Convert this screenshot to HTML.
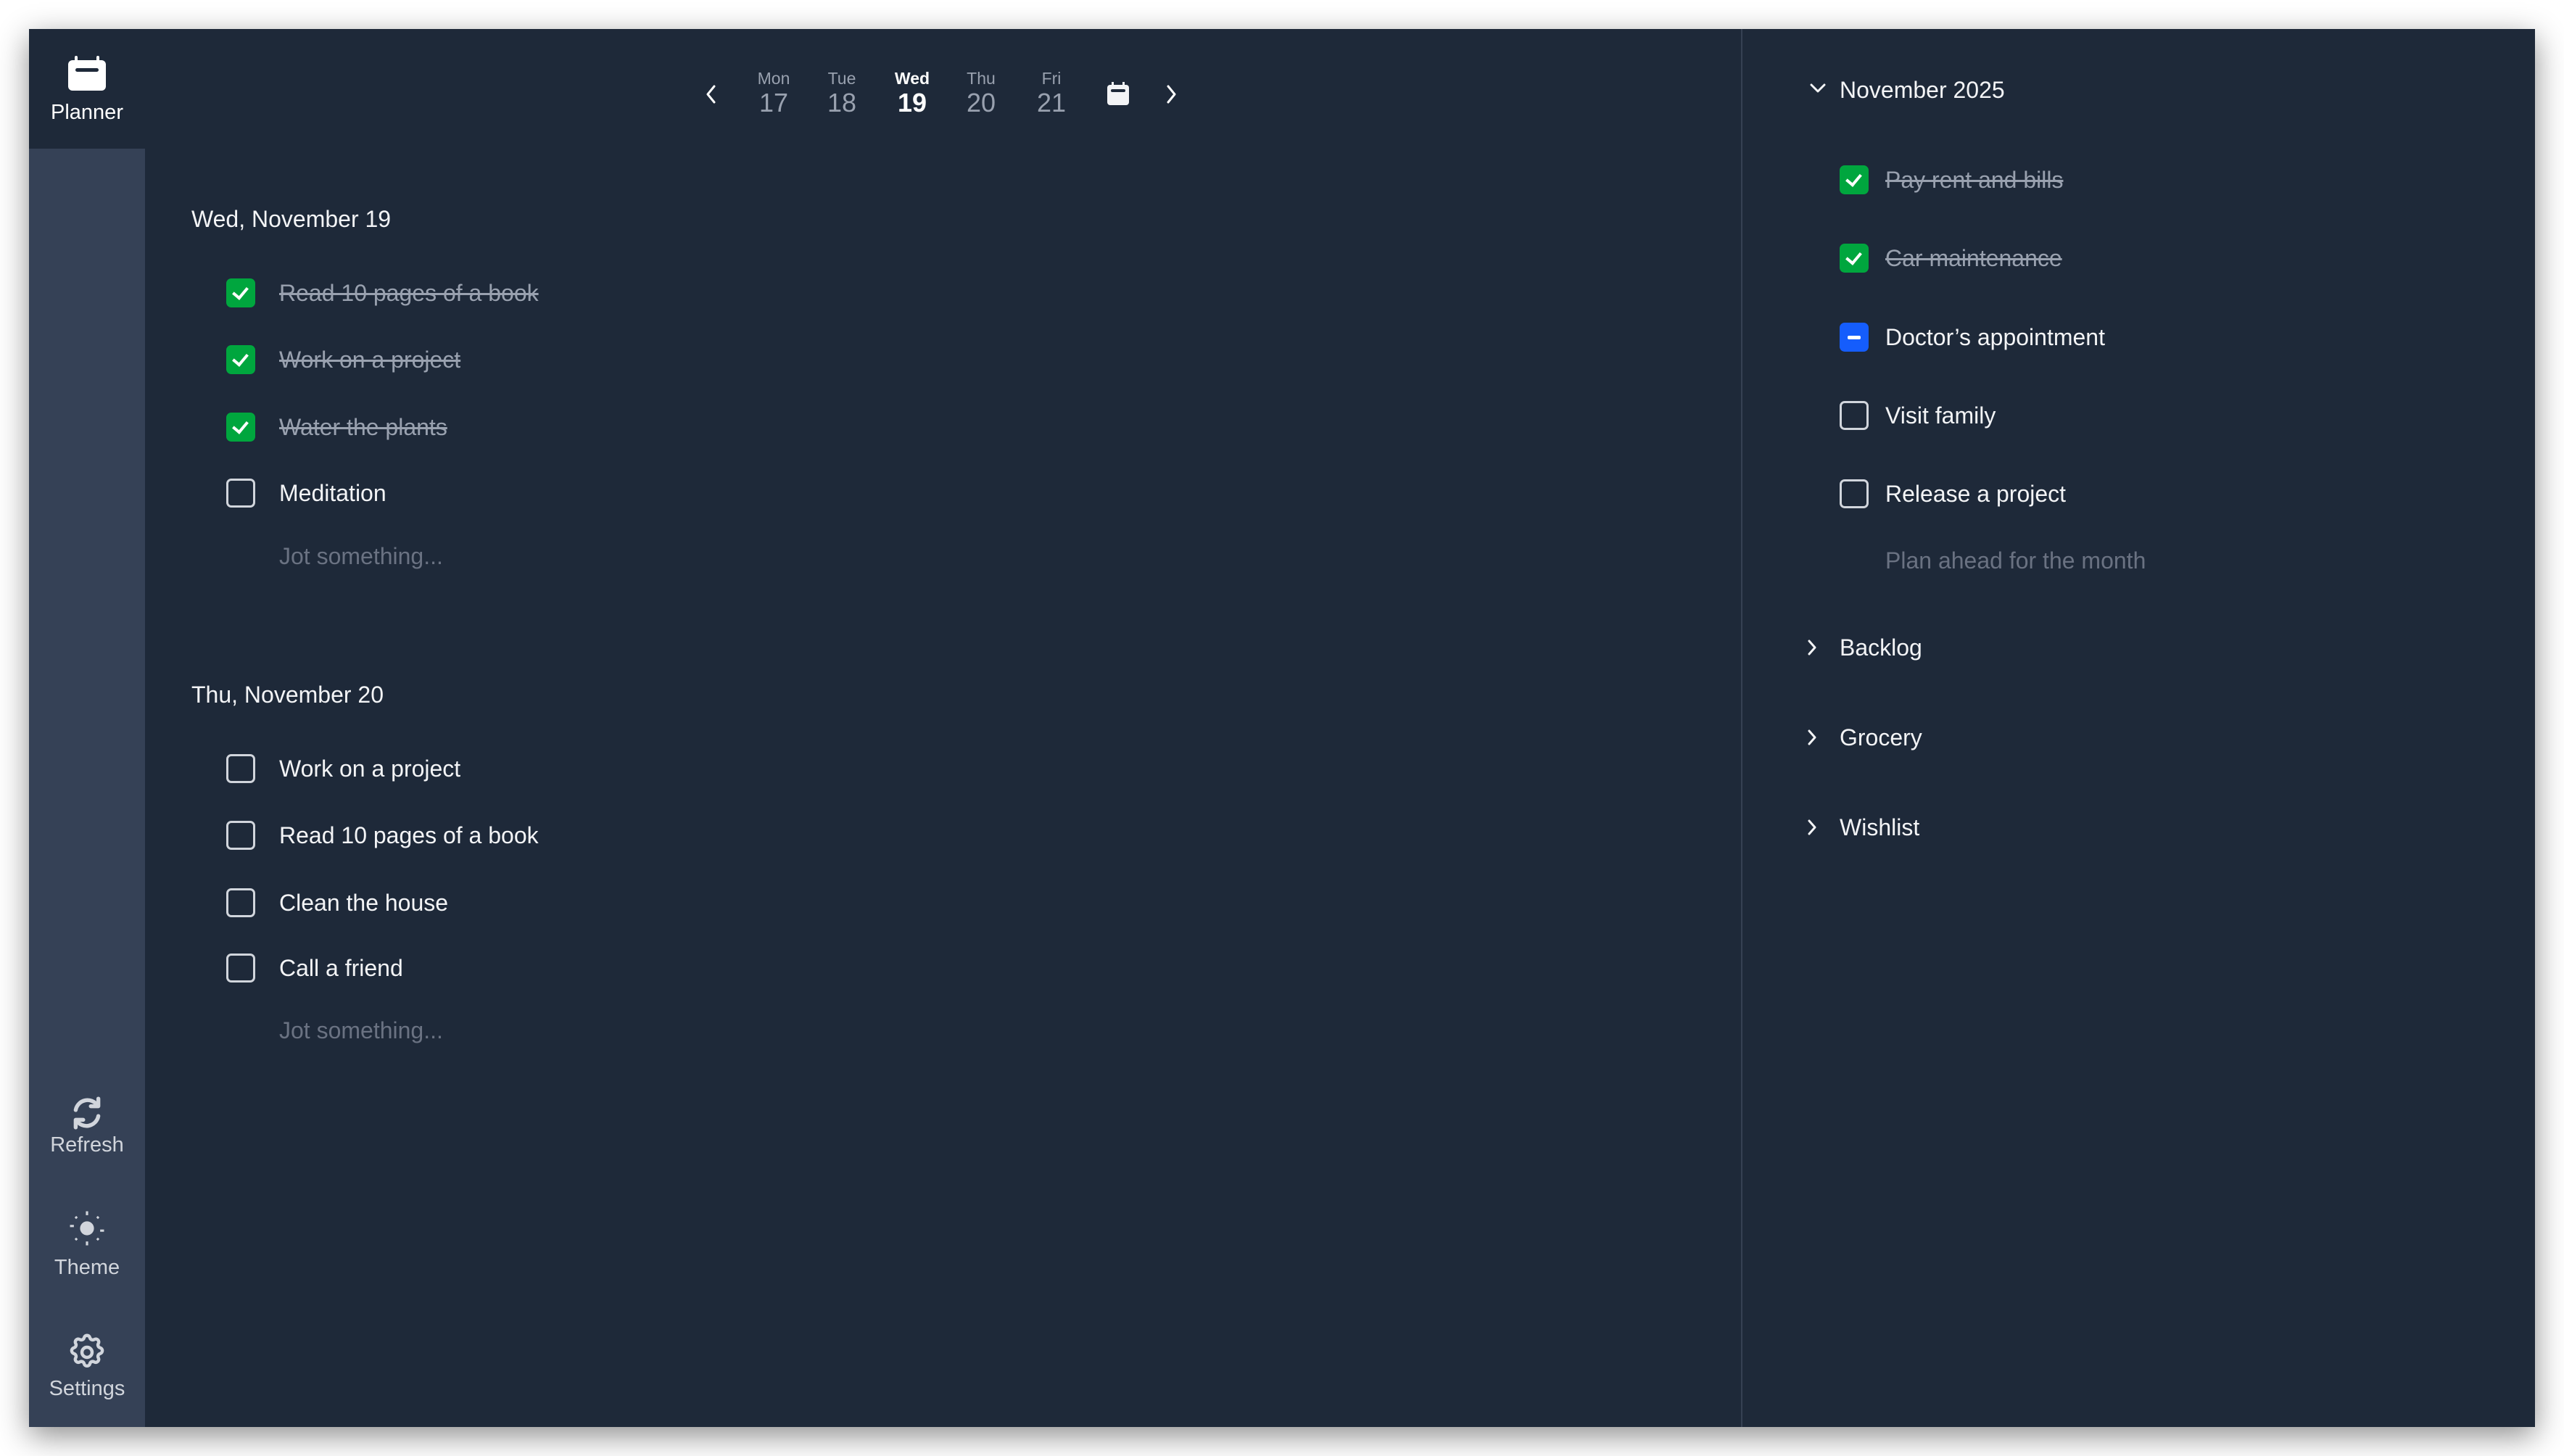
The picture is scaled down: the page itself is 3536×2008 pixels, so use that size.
<!DOCTYPE html>
<html><head><meta charset="utf-8"><style>
*{margin:0;padding:0;box-sizing:border-box}
body{width:3536px;height:2008px;background:#fff;font-family:"Liberation Sans",sans-serif;position:relative;overflow:hidden}
.win{position:absolute;left:40px;top:40px;width:3456px;height:1928px;background:#1e2939;box-shadow:0 12px 40px rgba(0,0,0,.45);overflow:hidden}
.side{position:absolute;left:0;top:165px;width:160px;height:1763px;background:#354156}
.a{position:absolute;white-space:nowrap}
.t{font-size:32px;color:#f3f4f6;line-height:40px;transform:translateY(-20px)}
.done{color:#99a1af;text-decoration:line-through;text-decoration-thickness:3px}
.ph{color:#6a7282}
.cb{position:absolute;width:40px;height:40px;border-radius:7px;transform:translateY(-20px)}
.un{border:3px solid #d1d5dc}
.ck{background:#00a63e}
.bl{background:#155dfc}
.lbl{font-size:29px;color:#d1d5dc;width:160px;text-align:center;left:0;line-height:34px;transform:translateY(-17px)}
.dl{font-size:23px;color:#99a1af;width:80px;text-align:center;line-height:28px;transform:translate(-40px,-14px)}
.dn{font-size:36px;color:#99a1af;width:80px;text-align:center;line-height:40px;transform:translate(-40px,-20px)}
.ck::after{content:"";position:absolute;left:13px;top:8px;width:9px;height:16px;border:solid #fff;border-width:0 4px 4px 0;transform:rotate(40deg)}
</style></head><body>
<div class="win">
<div class="side"></div>
<div style="position:absolute;left:2361px;top:0;width:2px;height:1928px;background:#364153"></div>

<svg class="a" style="left:54px;top:37px" width="52" height="50" viewBox="0 0 52 50"><rect x="9" y="0" width="4" height="12" rx="2" fill="#fff"/><rect x="39" y="0" width="4" height="12" rx="2" fill="#fff"/><rect x="0" y="6" width="52" height="42" rx="6" fill="#fff"/><rect x="10" y="17" width="32" height="5" rx="2.5" fill="#1e2939"/></svg>
<div class="a lbl" style="top:115px;color:#fff">Planner</div>

<svg class="a" style="left:55px;top:1470px" width="50" height="50" viewBox="0 0 24 24" fill="none" stroke="#d1d5dc" stroke-width="2.6" stroke-linecap="round" stroke-linejoin="round"><path d="M4.5 10a8 8 0 0 1 14.5-3"/><path d="M19.5 2.5v5h-5"/><path d="M19.5 14a8 8 0 0 1-14.5 3"/><path d="M4.5 21.5v-5h5"/></svg>
<div class="a lbl" style="top:1539px">Refresh</div>
<svg class="a" style="left:48px;top:1622px" width="64" height="64" viewBox="0 0 60 60" fill="#d1d5dc" stroke="#d1d5dc" stroke-width="3"><circle cx="30" cy="30" r="9" stroke="none"/><path d="M30 8v5M30 47v5M8 27h5M47 33h5M15 15l2 2M43 43l2 2M45 15l-2 2M15 45l2-2"/></svg>
<div class="a lbl" style="top:1708px">Theme</div>
<svg class="a" style="left:52px;top:1797px" width="56" height="56" viewBox="0 0 24 24" fill="none" stroke="#d1d5dc" stroke-width="1.9" stroke-linejoin="round"><path d="M10.3 3.3c.4-1.7 3-1.7 3.4 0a1.7 1.7 0 0 0 2.6 1.1c1.5-.9 3.3.8 2.4 2.4a1.7 1.7 0 0 0 1 2.5c1.8.5 1.8 3 0 3.5a1.7 1.7 0 0 0-1 2.5c.9 1.5-.9 3.3-2.4 2.4a1.7 1.7 0 0 0-2.6 1.1c-.4 1.7-3 1.7-3.4 0a1.7 1.7 0 0 0-2.6-1.1c-1.5.9-3.3-.9-2.4-2.4a1.7 1.7 0 0 0-1-2.5c-1.8-.5-1.8-3 0-3.5a1.7 1.7 0 0 0 1-2.5c-.9-1.6.9-3.3 2.4-2.4a1.7 1.7 0 0 0 2.6-1.1z"/><circle cx="12" cy="12" r="3"/></svg>
<div class="a lbl" style="top:1875px">Settings</div>

<svg class="a" style="left:930px;top:76px" width="22" height="28" viewBox="0 0 22 28" fill="none" stroke="#fff" stroke-width="3" stroke-linecap="round" stroke-linejoin="round"><path d="M15 3L6 14l9 11"/></svg>
<div class="a dl" style="left:1027px;top:68px">Mon</div><div class="a dn" style="left:1027px;top:102px">17</div>
<div class="a dl" style="left:1121px;top:68px">Tue</div><div class="a dn" style="left:1121px;top:102px">18</div>
<div class="a dl" style="left:1218px;top:68px;color:#fff;font-weight:bold">Wed</div><div class="a dn" style="left:1218px;top:102px;color:#fff;font-weight:bold">19</div>
<div class="a dl" style="left:1313px;top:68px">Thu</div><div class="a dn" style="left:1313px;top:102px">20</div>
<div class="a dl" style="left:1410px;top:68px">Fri</div><div class="a dn" style="left:1410px;top:102px">21</div>
<svg class="a" style="left:1487px;top:73px" width="30" height="32" viewBox="0 0 30 32"><rect x="6" y="0" width="3" height="7" fill="#f3f4f6"/><rect x="21" y="0" width="3" height="7" fill="#f3f4f6"/><rect x="0" y="4" width="30" height="28" rx="4" fill="#f3f4f6"/><rect x="5" y="10" width="20" height="4" rx="2" fill="#1e2939"/></svg>
<svg class="a" style="left:1564px;top:76px" width="22" height="28" viewBox="0 0 22 28" fill="none" stroke="#fff" stroke-width="3" stroke-linecap="round" stroke-linejoin="round"><path d="M7 3l9 11-9 11"/></svg>

<div class="a t" style="left:224px;top:262px">Wed, November 19</div>
<div class="cb ck" style="left:272px;top:364px"></div><div class="a t done" style="left:345px;top:364px">Read 10 pages of a book</div>
<div class="cb ck" style="left:272px;top:456px"></div><div class="a t done" style="left:345px;top:456px">Work on a project</div>
<div class="cb ck" style="left:272px;top:549px"></div><div class="a t done" style="left:345px;top:549px">Water the plants</div>
<div class="cb un" style="left:272px;top:640px"></div><div class="a t" style="left:345px;top:640px">Meditation</div>
<div class="a t ph" style="left:345px;top:727px">Jot something...</div>

<div class="a t" style="left:224px;top:918px">Thu, November 20</div>
<div class="cb un" style="left:272px;top:1020px"></div><div class="a t" style="left:345px;top:1020px">Work on a project</div>
<div class="cb un" style="left:272px;top:1112px"></div><div class="a t" style="left:345px;top:1112px">Read 10 pages of a book</div>
<div class="cb un" style="left:272px;top:1205px"></div><div class="a t" style="left:345px;top:1205px">Clean the house</div>
<div class="cb un" style="left:272px;top:1295px"></div><div class="a t" style="left:345px;top:1295px">Call a friend</div>
<div class="a t ph" style="left:345px;top:1381px">Jot something...</div>

<svg class="a" style="left:2454px;top:73px" width="26" height="18" viewBox="0 0 26 18" fill="none" stroke="#f3f4f6" stroke-width="3" stroke-linecap="round" stroke-linejoin="round"><path d="M4 4l9 9 9-9"/></svg>
<div class="a t" style="left:2497px;top:84px">November 2025</div>
<div class="cb ck" style="left:2497px;top:208px"></div><div class="a t done" style="left:2560px;top:208px">Pay rent and bills</div>
<div class="cb ck" style="left:2497px;top:316px"></div><div class="a t done" style="left:2560px;top:316px">Car maintenance</div>
<div class="cb bl" style="left:2497px;top:425px"></div><div class="a" style="left:2508px;top:423px;width:18px;height:5px;background:#fff;border-radius:2px"></div><div class="a t" style="left:2560px;top:425px">Doctor’s appointment</div>
<div class="cb un" style="left:2497px;top:533px"></div><div class="a t" style="left:2560px;top:533px">Visit family</div>
<div class="cb un" style="left:2497px;top:641px"></div><div class="a t" style="left:2560px;top:641px">Release a project</div>
<div class="a t ph" style="left:2560px;top:733px">Plan ahead for the month</div>

<svg class="a" style="left:2450px;top:840px" width="18" height="26" viewBox="0 0 18 26" fill="none" stroke="#f3f4f6" stroke-width="3" stroke-linecap="round" stroke-linejoin="round"><path d="M5 4l8 9-8 9"/></svg>
<div class="a t" style="left:2497px;top:853px">Backlog</div>
<svg class="a" style="left:2450px;top:964px" width="18" height="26" viewBox="0 0 18 26" fill="none" stroke="#f3f4f6" stroke-width="3" stroke-linecap="round" stroke-linejoin="round"><path d="M5 4l8 9-8 9"/></svg>
<div class="a t" style="left:2497px;top:977px">Grocery</div>
<svg class="a" style="left:2450px;top:1088px" width="18" height="26" viewBox="0 0 18 26" fill="none" stroke="#f3f4f6" stroke-width="3" stroke-linecap="round" stroke-linejoin="round"><path d="M5 4l8 9-8 9"/></svg>
<div class="a t" style="left:2497px;top:1101px">Wishlist</div>
</div>
</body></html>
